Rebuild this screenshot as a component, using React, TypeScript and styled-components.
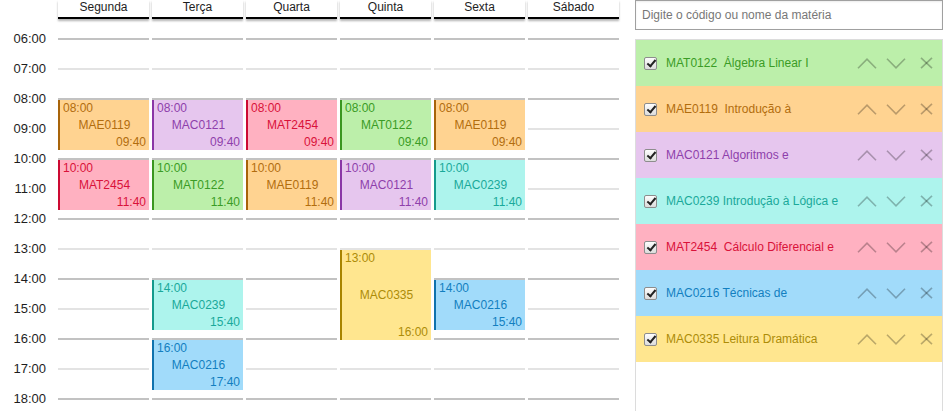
import React from 'react';
import styled, { createGlobalStyle } from 'styled-components';

const GlobalStyle = createGlobalStyle`
  html, body { margin: 0; padding: 0; overflow: hidden; background: #fff; }
  body { font-family: "Liberation Sans", Arial, sans-serif; color: #222; }
  * { box-sizing: border-box; }
`;

type Tone = 'orange' | 'purple' | 'pink' | 'green' | 'cyan' | 'blue' | 'yellow';

const palette: Record<Tone, { bg: string; fg: string; edge: string }> = {
  orange: { bg: '#ffd391', fg: '#b26d0e', edge: '#a8640a' },
  purple: { bg: '#e6c6ee', fg: '#8e3fab', edge: '#8a36a6' },
  pink: { bg: '#ffb1c1', fg: '#d9123a', edge: '#cc0a33' },
  green: { bg: '#bcefaa', fg: '#3a9c25', edge: '#3a9620' },
  cyan: { bg: '#adf4ed', fg: '#1aa99a', edge: '#149a8c' },
  blue: { bg: '#a1dbfa', fg: '#127fc0', edge: '#0f72ad' },
  yellow: { bg: '#ffe68f', fg: '#ad8c08', edge: '#a88400' },
};

const days = ['Segunda', 'Terça', 'Quarta', 'Quinta', 'Sexta', 'Sábado'];
const hours = Array.from({ length: 13 }, (_, i) => 6 + i);

type Ev = { day: number; start: string; end: string; code: string; tone: Tone };
const events: Ev[] = [
  { day: 0, start: '08:00', end: '09:40', code: 'MAE0119', tone: 'orange' },
  { day: 0, start: '10:00', end: '11:40', code: 'MAT2454', tone: 'pink' },
  { day: 1, start: '08:00', end: '09:40', code: 'MAC0121', tone: 'purple' },
  { day: 1, start: '10:00', end: '11:40', code: 'MAT0122', tone: 'green' },
  { day: 1, start: '14:00', end: '15:40', code: 'MAC0239', tone: 'cyan' },
  { day: 1, start: '16:00', end: '17:40', code: 'MAC0216', tone: 'blue' },
  { day: 2, start: '08:00', end: '09:40', code: 'MAT2454', tone: 'pink' },
  { day: 2, start: '10:00', end: '11:40', code: 'MAE0119', tone: 'orange' },
  { day: 3, start: '08:00', end: '09:40', code: 'MAT0122', tone: 'green' },
  { day: 3, start: '10:00', end: '11:40', code: 'MAC0121', tone: 'purple' },
  { day: 3, start: '13:00', end: '16:00', code: 'MAC0335', tone: 'yellow' },
  { day: 4, start: '08:00', end: '09:40', code: 'MAE0119', tone: 'orange' },
  { day: 4, start: '10:00', end: '11:40', code: 'MAC0239', tone: 'cyan' },
  { day: 4, start: '14:00', end: '15:40', code: 'MAC0216', tone: 'blue' },
];

type Course = { code: string; name: string; tone: Tone };
const courses: Course[] = [
  { code: 'MAT0122', name: '  Álgebra Linear I', tone: 'green' },
  { code: 'MAE0119', name: '  Introdução à', tone: 'orange' },
  { code: 'MAC0121', name: ' Algoritmos e', tone: 'purple' },
  { code: 'MAC0239', name: ' Introdução à Lógica e', tone: 'cyan' },
  { code: 'MAT2454', name: '  Cálculo Diferencial e', tone: 'pink' },
  { code: 'MAC0216', name: ' Técnicas de', tone: 'blue' },
  { code: 'MAC0335', name: ' Leitura Dramática', tone: 'yellow' },
];

const toSlot = (t: string) => {
  const [h, m] = t.split(':').map(Number);
  return ((h - 6) * 60 + m) / 10;
};

const Page = styled.div`
  display: flex;
  align-items: flex-start;
  height: 411px;
  overflow: hidden;
`;

const Schedule = styled.div`
  width: 619px;
  flex: none;
`;

const HeaderRow = styled.div`
  display: grid;
  grid-template-columns: 55px repeat(6, 91px);
  column-gap: 3px;
`;

const DayName = styled.div<{ $col: number }>`
  grid-column: ${(p) => p.$col};
  font-size: 12px;
  line-height: 14px;
  text-align: center;
  color: #1e1e1e;
  padding-bottom: 3px;
  border-bottom: 2px solid #000;
  box-shadow: 0 2px 2px rgba(0, 0, 0, 0.3);
`;

const Body = styled.div`
  margin-top: 19px;
  display: grid;
  grid-template-columns: 55px repeat(6, 91px);
  grid-template-rows: repeat(78, 5px);
  column-gap: 3px;
`;

const TimeLabel = styled.div<{ $row: number }>`
  grid-column: 1;
  grid-row: ${(p) => p.$row} / span 6;
  font-size: 13px;
  line-height: 15px;
  text-align: right;
  padding-right: 9px;
  color: #1e1e1e;
  transform: translateY(-7px);
`;

const HourLine = styled.div<{ $col: number; $row: number; $strong: boolean }>`
  grid-column: ${(p) => p.$col};
  grid-row: ${(p) => p.$row} / span 6;
  border-top: 2px solid ${(p) => (p.$strong ? '#c2c2c2' : '#e3e3e3')};
`;

const EventBox = styled.div<{ $col: number; $row: number; $span: number; $tone: Tone }>`
  grid-column: ${(p) => p.$col};
  grid-row: ${(p) => p.$row} / span ${(p) => p.$span};
  transform: translateY(2px);
  background: ${(p) => palette[p.$tone].bg};
  color: ${(p) => palette[p.$tone].fg};
  border-left: 2px solid ${(p) => palette[p.$tone].edge};
  display: flex;
  flex-direction: column;
  justify-content: space-between;
  padding: 1px 3px 1px 3px;
  font-size: 12px;
  line-height: 14px;
  position: relative;
`;

const EvLine = styled.div<{ $align: 'left' | 'center' | 'right' }>`
  text-align: ${(p) => p.$align};
`;

const Sidebar = styled.div`
  margin-left: 16px;
  width: 308px;
  flex: none;
  display: flex;
  flex-direction: column;
  gap: 9px;
`;

const Search = styled.input`
  height: 30px;
  width: 100%;
  border: 1px solid #a0a0a0;
  box-shadow: inset 0 1px 2px rgba(0, 0, 0, 0.08);
  padding: 0 6px;
  font-family: "Liberation Sans", Arial, sans-serif;
  font-size: 12px;
  color: #333;
  outline: none;
  &::placeholder { color: #777; }
`;

const List = styled.div`
  border: 1px solid #dcdcdc;
  border-bottom: none;
  height: 380px;
  background: #fff;
`;

const CourseRow = styled.div<{ $tone: Tone }>`
  height: 46px;
  display: flex;
  align-items: center;
  padding: 0 6px 0 8px;
  background: ${(p) => palette[p.$tone].bg};
  color: ${(p) => palette[p.$tone].fg};
  font-size: 12px;
`;

const Check = styled.input`
  appearance: none;
  -webkit-appearance: none;
  margin: 0 9px 0 0;
  width: 13px;
  height: 13px;
  border: 1px solid #8d8d8d;
  border-radius: 2px;
  background: linear-gradient(#fdfdfd, #dcdcdc);
  position: relative;
  flex: none;
  &::after {
    content: '';
    position: absolute;
    left: 3.5px;
    top: 0.5px;
    width: 3px;
    height: 7px;
    border-right: 2px solid #222;
    border-bottom: 2px solid #222;
    transform: rotate(40deg);
  }
`;

const CourseText = styled.span`
  flex: 1;
  white-space: pre;
  overflow: hidden;
  line-height: 14px;
`;

const Actions = styled.div`
  display: flex;
  align-items: center;
  flex: none;
`;

const IconBtn = styled.span<{ $w: number; $gap: number }>`
  width: ${(p) => p.$w}px;
  margin-left: ${(p) => p.$gap}px;
  height: 14px;
  display: flex;
  align-items: center;
  justify-content: center;
  color: rgba(0, 0, 0, 0.27);
  svg { display: block; }
`;

const UpIcon = () => (
  <svg width="20" height="11" viewBox="0 0 20 11" fill="none" stroke="currentColor" strokeWidth="1.6">
    <polyline points="1,10.2 10,1.2 19,10.2" />
  </svg>
);
const DownIcon = () => (
  <svg width="20" height="11" viewBox="0 0 20 11" fill="none" stroke="currentColor" strokeWidth="1.6">
    <polyline points="1,0.8 10,9.8 19,0.8" />
  </svg>
);
const CloseIcon = () => (
  <svg width="13" height="12" viewBox="0 0 13 12" fill="none" stroke="currentColor" strokeWidth="1.6">
    <line x1="1" y1="0.8" x2="12" y2="11.2" />
    <line x1="12" y1="0.8" x2="1" y2="11.2" />
  </svg>
);

export default function App() {
  return (
    <>
      <GlobalStyle />
      <Page>
        <Schedule>
          <HeaderRow>
            {days.map((d, i) => (
              <DayName key={d} $col={i + 2}>
                {d}
              </DayName>
            ))}
          </HeaderRow>
          <Body>
            {hours.map((h, k) => (
              <TimeLabel key={`t${h}`} $row={k * 6 + 1}>
                {String(h).padStart(2, '0')}:00
              </TimeLabel>
            ))}
            {days.map((_, d) =>
              hours.map((h, k) => (
                <HourLine key={`l${d}-${h}`} $col={d + 2} $row={k * 6 + 1} $strong={h % 2 === 0} />
              ))
            )}
            {events.map((e, i) => {
              const s = toSlot(e.start);
              const span = toSlot(e.end) - s;
              return (
                <EventBox key={i} $col={e.day + 2} $row={s + 1} $span={span} $tone={e.tone}>
                  <EvLine $align="left">{e.start}</EvLine>
                  <EvLine $align="center">{e.code}</EvLine>
                  <EvLine $align="right">{e.end}</EvLine>
                </EventBox>
              );
            })}
          </Body>
        </Schedule>
        <Sidebar>
          <Search placeholder="Digite o código ou nome da matéria" />
          <List>
            {courses.map((c) => (
              <CourseRow key={c.code} $tone={c.tone}>
                <Check type="checkbox" defaultChecked />
                <CourseText>
                  {c.code}
                  {c.name}
                </CourseText>
                <Actions>
                  <IconBtn $w={20} $gap={0}>
                    <UpIcon />
                  </IconBtn>
                  <IconBtn $w={20} $gap={9}>
                    <DownIcon />
                  </IconBtn>
                  <IconBtn $w={20} $gap={10}>
                    <CloseIcon />
                  </IconBtn>
                </Actions>
              </CourseRow>
            ))}
          </List>
        </Sidebar>
      </Page>
    </>
  );
}
